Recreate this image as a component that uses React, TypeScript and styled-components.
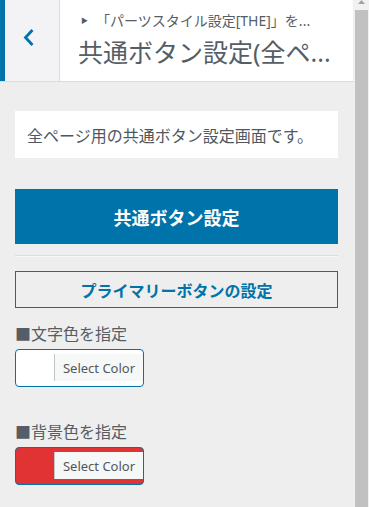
import React from 'react';
import styled, { createGlobalStyle } from 'styled-components';

const GlobalStyle = createGlobalStyle`
  html, body {
    margin: 0;
    padding: 0;
    background: #eeeeee;
    font-family: "Noto Sans", "Noto Sans CJK JP", sans-serif;
  }
  * { box-sizing: border-box; }
`;

const Page = styled.div`
  display: flex;
  height: 507px;
  overflow: hidden;
`;

const Sidebar = styled.div`
  flex: 1;
  min-width: 0;
  display: flex;
  flex-direction: column;
`;

const Header = styled.div`
  display: flex;
  height: 82px;
  border-bottom: 1px solid #dcdcde;
`;

const BackButton = styled.button`
  width: 59px;
  flex: none;
  border: none;
  border-left: 5px solid #0073aa;
  background: #f3f3f5;
  padding: 28px 0 0 17px;
  display: flex;
  align-items: flex-start;
  cursor: pointer;
`;

const TitleBlock = styled.div`
  flex: 1;
  min-width: 0;
  background: #fff;
  border-left: 1px solid #dcdcde;
  margin-right: 1px;
  padding: 11px 10px 0 18px;
  color: #555d66;
`;

const Breadcrumb = styled.div`
  font-size: 14px;
  line-height: 20px;
  white-space: nowrap;
  padding-left: 3px;

  span {
    font-size: 7px;
    margin-right: 8px;
    vertical-align: 3px;
  }
`;

const Title = styled.div`
  margin-top: 5px;
  font-size: 25px;
  line-height: 32px;
  white-space: nowrap;
`;

const Body = styled.div`
  padding: 29px 16px 0 15px;
  display: flex;
  flex-direction: column;
`;

const Description = styled.div`
  background: #fff;
  height: 47px;
  padding: 0 12px;
  display: flex;
  align-items: center;
  font-size: 16px;
  color: #50575e;
`;

const PrimaryButton = styled.div`
  margin-top: 31px;
  height: 55px;
  background: #0073aa;
  color: #fff;
  font-size: 18px;
  font-weight: 700;
  display: flex;
  align-items: center;
  justify-content: center;
`;

const Divider = styled.hr`
  margin: 11px 0 0;
  border: none;
  border-top: 1px solid #dcdcde;
  border-bottom: 1px solid #f6f6f6;
`;

const SectionHeading = styled.div`
  margin-top: 14px;
  height: 37px;
  border: 1px solid #0073aa;
  color: #0073aa;
  font-size: 16px;
  font-weight: 700;
  display: flex;
  align-items: center;
  justify-content: center;
`;

const FieldLabel = styled.div<{ $gap: number }>`
  margin-top: ${(p) => p.$gap}px;
  font-size: 16px;
  line-height: 24px;
  color: #555d66;
`;

const ColorButton = styled.button<{ $color: string }>`
  margin-top: 3px;
  width: 129px;
  height: 38px;
  padding: 4px 0 5px 38px;
  border: 1px solid #0073aa;
  border-radius: 4px;
  background: ${(p) => p.$color};
  display: flex;
  cursor: pointer;
`;

const ColorText = styled.span`
  flex: 1;
  background: #f6f7f7;
  border-left: 1px solid #c3c4c7;
  font-family: "Noto Sans", sans-serif;
  font-size: 13px;
  color: #50575e;
  display: flex;
  align-items: center;
  justify-content: center;
`;

const Scrollbar = styled.div`
  width: 15px;
  flex: none;
  background: #f1f1f1;
  display: flex;
  flex-direction: column;
  align-items: center;
`;

const ScrollThumb = styled.div`
  margin-top: 6px;
  width: 13px;
  flex: 1;
  background: #c1c1c1;
`;

function ColorField({ label, color, gap }: { label: string; color: string; gap: number }) {
  return (
    <>
      <FieldLabel $gap={gap}>{label}</FieldLabel>
      <ColorButton $color={color}>
        <ColorText>Select Color</ColorText>
      </ColorButton>
    </>
  );
}

export default function App() {
  return (
    <Page>
      <GlobalStyle />
      <Sidebar>
        <Header>
          <BackButton aria-label="戻る">
            <svg width="13" height="19" viewBox="0 0 13 19">
              <polyline points="10.5,2 3.5,9.5 10.5,17" fill="none" stroke="#0073aa" strokeWidth="2.8" />
            </svg>
          </BackButton>
          <TitleBlock>
            <Breadcrumb>
              <span>▶</span>「パーツスタイル設定[THE]」を...
            </Breadcrumb>
            <Title>共通ボタン設定(全ペ...</Title>
          </TitleBlock>
        </Header>
        <Body>
          <Description>全ページ用の共通ボタン設定画面です。</Description>
          <PrimaryButton>共通ボタン設定</PrimaryButton>
          <Divider />
          <SectionHeading>プライマリーボタンの設定</SectionHeading>
          <ColorField label="■文字色を指定" color="#ffffff" gap={14} />
          <ColorField label="■背景色を指定" color="#e13333" gap={33} />
        </Body>
      </Sidebar>
      <Scrollbar>
        <svg width="15" height="4" viewBox="0 0 15 4">
          <polygon points="4,4 11,4 7.5,0" fill="#a3a3a3" />
        </svg>
        <ScrollThumb />
      </Scrollbar>
    </Page>
  );
}
